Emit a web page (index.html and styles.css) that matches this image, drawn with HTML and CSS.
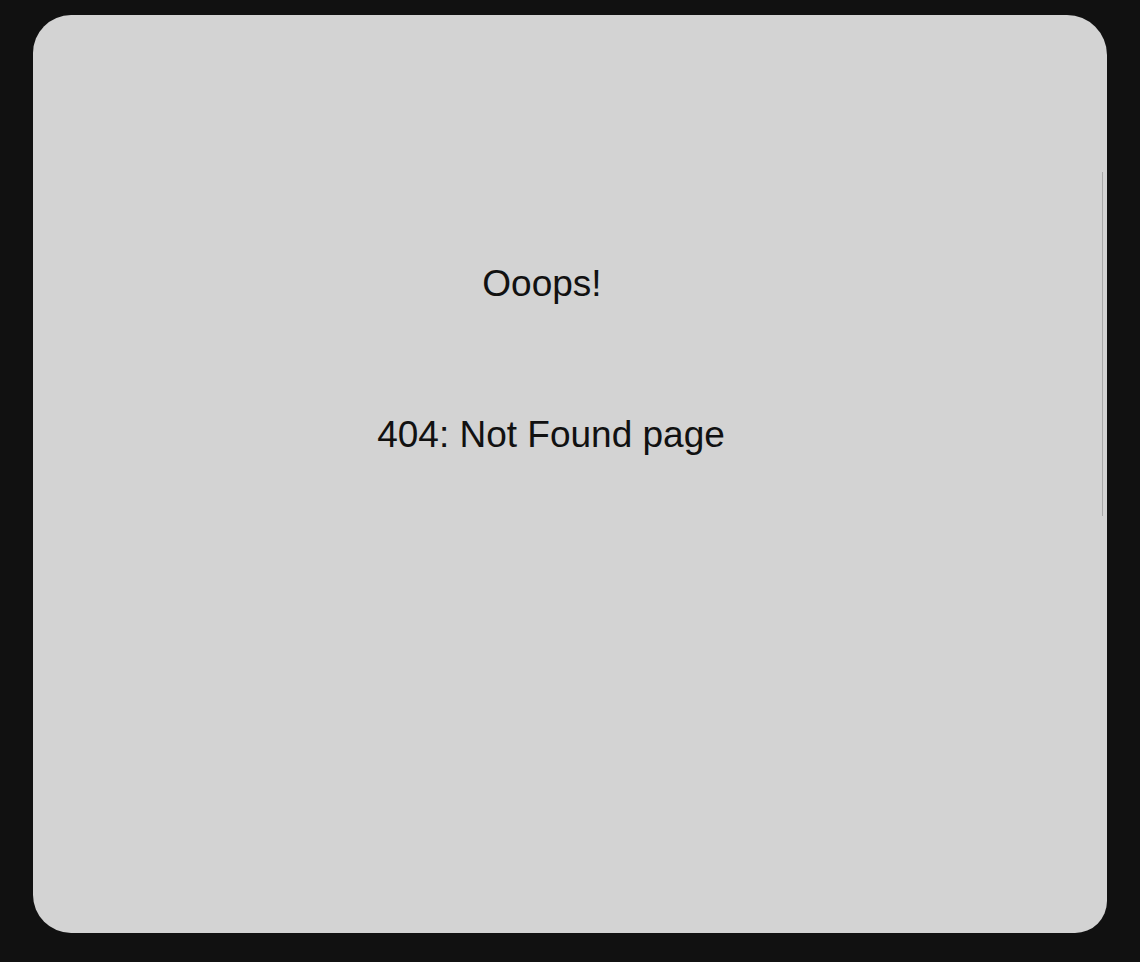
FILE: index.html
```html
<!DOCTYPE html>
<html lang="en">
<head>
<meta charset="utf-8">
<title>404</title>
<link rel="stylesheet" href="styles.css">
</head>
<body>
  <main class="card">
    <h1 class="title">Ooops!</h1>
    <p class="message">404: Not Found page</p>
  </main>
</body>
</html>
```

FILE: styles.css
```css
html, body {
  margin: 0;
  padding: 0;
}

body {
  background: #111111;
  height: 962px;
  box-sizing: border-box;
  padding: 15px 33px 29px 33px;
  font-family: "Liberation Sans", Arial, Helvetica, sans-serif;
  color: #111111;
}

.card {
  position: relative;
  box-sizing: border-box;
  height: 918px;
  background: #d3d3d3;
  border-radius: 38px 40px 32px 38px;
  padding-top: 250px;
  display: flex;
  flex-direction: column;
}

.card::after {
  content: "";
  position: absolute;
  right: 4px;
  top: 157px;
  width: 1px;
  height: 344px;
  background: #a8a8a8;
}

.title {
  margin: 0;
  font-size: 37px;
  line-height: 37px;
  font-weight: normal;
  text-align: center;
  padding-right: 56px;
}

.message {
  margin: 114px 0 0 0;
  font-size: 37px;
  line-height: 37px;
  text-align: center;
  padding-right: 38px;
}
```
